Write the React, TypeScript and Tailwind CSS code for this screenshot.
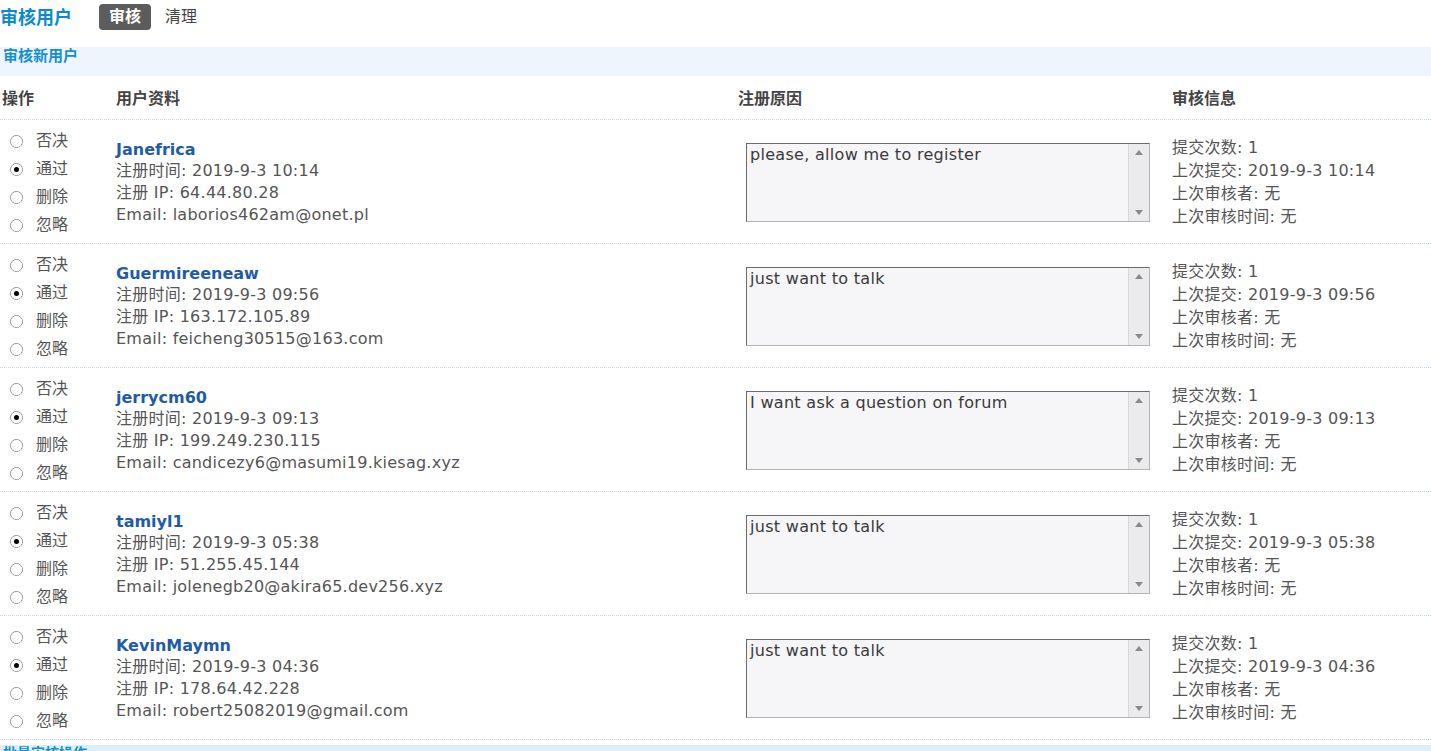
import React from "react";

type U = { name: string; time: string; ip: string; email: string; reason: string };

const users: U[] = [
  { name: "Janefrica", time: "2019-9-3 10:14", ip: "64.44.80.28", email: "laborios462am@onet.pl", reason: "please, allow me to register" },
  { name: "Guermireeneaw", time: "2019-9-3 09:56", ip: "163.172.105.89", email: "feicheng30515@163.com", reason: "just want to talk" },
  { name: "jerrycm60", time: "2019-9-3 09:13", ip: "199.249.230.115", email: "candicezy6@masumi19.kiesag.xyz", reason: "I want ask a question on forum" },
  { name: "tamiyl1", time: "2019-9-3 05:38", ip: "51.255.45.144", email: "jolenegb20@akira65.dev256.xyz", reason: "just want to talk" },
  { name: "KevinMaymn", time: "2019-9-3 04:36", ip: "178.64.42.228", email: "robert25082019@gmail.com", reason: "just want to talk" },
];

const font = "font-['DejaVu_Sans','Noto_Sans_CJK_SC',sans-serif]";

function Radio({ checked }: { checked?: boolean }) {
  return (
    <span className="relative inline-flex h-[13px] w-[13px] items-center justify-center rounded-full border border-[#8e8f8f] bg-gradient-to-br from-[#dcdcdc] to-white">
      <span className="h-[11px] w-[11px] rounded-full bg-white flex items-center justify-center">
        {checked && <span className="h-[5px] w-[5px] rounded-full bg-black" />}
      </span>
    </span>
  );
}

function Row({ u }: { u: U }) {
  const opts = ["否决", "通过", "删除", "忽略"];
  return (
    <div className="flex h-[124px] border-b border-dotted border-[#c4d4e4]">
      <div className="w-[116px] pt-[7px] flex flex-col">
        {opts.map((o, i) => (
          <div key={o} className="h-[28px] flex items-center">
            <span className="ml-[10px] flex"><Radio checked={i === 1} /></span>
            <span className="ml-[13px] text-[16px] text-[#555]">{o}</span>
          </div>
        ))}
      </div>
      <div className="w-[622px] pt-[20px] text-[16px] tracking-[0.25px] text-[#555]">
        <div className="leading-[20px] font-bold tracking-normal text-[16px] text-[#1f5ca6]">{u.name}</div>
        <div className="leading-[22px]">注册时间: {u.time}</div>
        <div className="leading-[22px]">注册 IP: {u.ip}</div>
        <div className="leading-[22px]">Email: {u.email}</div>
      </div>
      <div className="w-[434px] pt-[23px] pl-[8px]">
        <div className="flex h-[79px] w-[404px] border border-t-[#6a6a6a] border-l-[#6a6a6a] border-r-[#b4b4b4] border-b-[#b4b4b4] bg-[#f6f5f8]">
          <div className="flex-1 px-[3px] pt-[1px] text-[16px] tracking-[0.3px] leading-[20px] text-[#3a3a3a]">{u.reason}</div>
          <div className="w-[21px] flex flex-col items-center justify-between border-l border-[#d8d8d8] bg-[#ebebee] py-[6px]">
            <svg width="8" height="5" viewBox="0 0 8 5"><path d="M0 5 L4 0 L8 5 Z" fill="#8a8a8a" /></svg>
            <svg width="8" height="5" viewBox="0 0 8 5"><path d="M0 0 L4 5 L8 0 Z" fill="#8a8a8a" /></svg>
          </div>
        </div>
      </div>
      <div className="flex-1 pt-[16px] text-[16px] tracking-[0.25px] leading-[23px] text-[#555]">
        <div>提交次数: 1</div>
        <div>上次提交: {u.time}</div>
        <div>上次审核者: 无</div>
        <div>上次审核时间: 无</div>
      </div>
    </div>
  );
}

export default function App() {
  return (
    <div className={`${font} w-[1431px] h-[751px] overflow-hidden bg-white`}>
      <div className="h-[47px] flex items-start pt-[4px]">
        <div className="h-[26px] flex items-center text-[18px] font-bold text-[#0b8bcc]">审核用户</div>
        <div className="ml-[27px] h-[26px] w-[52px] flex items-center justify-center rounded-[4px] bg-[#5c5c5c] text-[16px] font-bold text-white">审核</div>
        <div className="ml-[14px] h-[26px] flex items-center text-[16px] text-[#444]">清理</div>
      </div>
      <div className="h-[29px] bg-[#eef5fc] pl-[3px] pt-[1px] text-[15px] font-bold leading-[16px] text-[#1490cf]">审核新用户</div>
      <div className="flex h-[44px] items-center pt-[2px] border-b border-dotted border-[#c4d4e4] text-[16px] font-bold text-[#444]">
        <div className="w-[116px] pl-[2px]">操作</div>
        <div className="w-[622px]">用户资料</div>
        <div className="w-[434px]">注册原因</div>
        <div className="flex-1">审核信息</div>
      </div>
      {users.map((u) => (
        <Row key={u.name} u={u} />
      ))}
      <div className="mt-[5px] h-[30px] bg-[#dceef8] pl-[3px] text-[14px] font-bold leading-[16px] text-[#1490cf]">批量审核操作</div>
    </div>
  );
}
